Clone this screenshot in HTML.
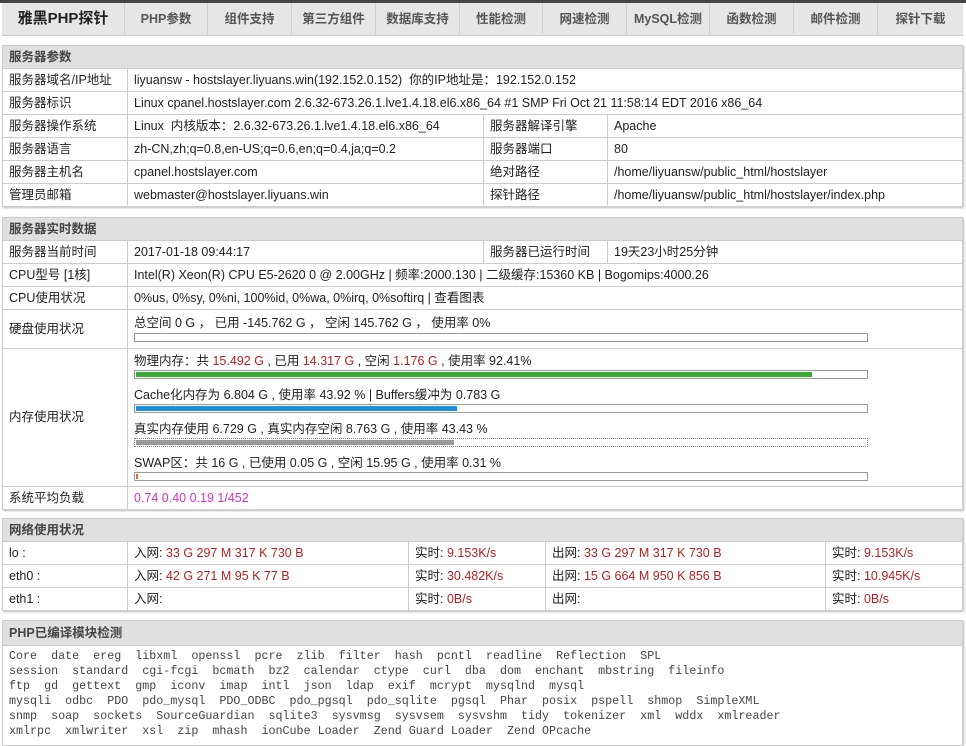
<!DOCTYPE html>
<html><head><meta charset="utf-8"><style>
*{margin:0;padding:0;box-sizing:border-box}
body{width:966px;height:741px;background:#fff;font-family:"Liberation Sans","Noto Sans CJK SC",sans-serif;font-size:12.5px;color:#222;position:relative;overflow:hidden}
#topline{position:absolute;left:0;top:0;width:966px;height:3px;background:#444}
#nav{position:absolute;left:2px;top:3px;width:961px;height:33px;background:#e6e6e6;border-bottom:1px solid #ccc;display:flex}
#nav div{height:33px;line-height:32px;text-align:center;font-weight:bold;color:#555;font-size:12.5px;border-right:1px solid #d0d0d0}
#nav div.first{font-size:15px;color:#222}
table{position:absolute;left:2px;width:961px;border-collapse:collapse;table-layout:fixed;box-shadow:1px 1px 2px #bbb}
td{border:1px solid #ccc;height:23px;line-height:21px;padding:0 6px;white-space:nowrap;overflow:hidden;vertical-align:middle}
th{background:#e0e0e0;border:1px solid #ccc;height:23px;line-height:21px;text-align:left;padding:0 6px;font-weight:bold;color:#444;font-size:12.5px}
.r{color:#b22222}.m{color:#cc33cc}
.bar{width:734px;height:9px;border:1px solid #999;position:relative}
.bar i{position:absolute;left:1px;top:1px;height:5px;display:block}
.t{height:18px;line-height:18px;margin-top:2px}
.blk{height:32px}
pre{font-family:"Liberation Mono",monospace;font-size:11.7px;line-height:15px;color:#444;padding:3px 6px}
</style></head><body>
<div id="topline"></div>
<div id="nav">
<div class="first" style="width:123px">雅黑PHP探针</div><div style="width:83px">PHP参数</div><div style="width:84px">组件支持</div><div style="width:84px">第三方组件</div><div style="width:84px">数据库支持</div><div style="width:83px">性能检测</div><div style="width:84px">网速检测</div><div style="width:83px">MySQL检测</div><div style="width:84px">函数检测</div><div style="width:84px">邮件检测</div><div style="width:85px;border-right:0">探针下载</div>
</div>

<table style="top:45px"><colgroup><col style="width:125px"><col style="width:356px"><col style="width:124px"><col></colgroup>
<tr><th colspan="4">服务器参数</th></tr>
<tr><td>服务器域名/IP地址</td><td colspan="3">liyuansw - hostslayer.liyuans.win(192.152.0.152)&nbsp; 你的IP地址是：192.152.0.152</td></tr>
<tr><td>服务器标识</td><td colspan="3">Linux cpanel.hostslayer.com 2.6.32-673.26.1.lve1.4.18.el6.x86_64 #1 SMP Fri Oct 21 11:58:14 EDT 2016 x86_64</td></tr>
<tr><td>服务器操作系统</td><td>Linux &nbsp;内核版本：2.6.32-673.26.1.lve1.4.18.el6.x86_64</td><td>服务器解译引擎</td><td>Apache</td></tr>
<tr><td>服务器语言</td><td>zh-CN,zh;q=0.8,en-US;q=0.6,en;q=0.4,ja;q=0.2</td><td>服务器端口</td><td>80</td></tr>
<tr><td>服务器主机名</td><td>cpanel.hostslayer.com</td><td>绝对路径</td><td>/home/liyuansw/public_html/hostslayer</td></tr>
<tr><td>管理员邮箱</td><td>webmaster@hostslayer.liyuans.win</td><td>探针路径</td><td>/home/liyuansw/public_html/hostslayer/index.php</td></tr>
</table>

<table style="top:217px"><colgroup><col style="width:125px"><col style="width:356px"><col style="width:124px"><col></colgroup>
<tr><th colspan="4">服务器实时数据</th></tr>
<tr><td>服务器当前时间</td><td>2017-01-18 09:44:17</td><td>服务器已运行时间</td><td>19天23小时25分钟</td></tr>
<tr><td>CPU型号 [1核]</td><td colspan="3">Intel(R) Xeon(R) CPU E5-2620 0 @ 2.00GHz | 频率:2000.130 | 二级缓存:15360 KB | Bogomips:4000.26</td></tr>
<tr><td>CPU使用状况</td><td colspan="3">0%us, 0%sy, 0%ni, 100%id, 0%wa, 0%irq, 0%softirq | 查看图表</td></tr>
<tr><td style="height:39px">硬盘使用状况</td><td colspan="3" style="height:39px;vertical-align:top;padding-top:2px"><div class="t">总空间 0 G ， 已用 -145.762 G ， 空闲 145.762 G ， 使用率 0%</div><div class="bar" style="margin-top:1px"></div></td></tr>
<tr><td style="height:136px">内存使用状况</td><td colspan="3" style="height:136px;vertical-align:top;padding-top:1px">
<div class="blk"><div class="t">物理内存：共 <span class="r">15.492 G</span> , 已用 <span class="r">14.317 G</span> , 空闲 <span class="r">1.176 G</span> , 使用率 92.41%</div><div class="bar"><i style="width:676px;background:#3aaa35"></i></div></div>
<div class="blk"><div class="t">Cache化内存为 6.804 G , 使用率 43.92 % | Buffers缓冲为 0.783 G</div><div class="bar"><i style="width:321px;background:#1e90e0"></i></div></div>
<div class="blk"><div class="t">真实内存使用 6.729 G , 真实内存空闲 8.763 G , 使用率 43.43 %</div><div class="bar" style="border:1px dotted #888"><i style="width:318px;background:#999"></i></div></div>
<div class="blk"><div class="t">SWAP区：共 16 G , 已使用 0.05 G , 空闲 15.95 G , 使用率 0.31 %</div><div class="bar"><i style="width:2px;background:#e07030"></i></div></div>
</td></tr>
<tr><td>系统平均负载</td><td colspan="3" class="m">0.74 0.40 0.19 1/452</td></tr>
</table>

<table style="top:518px"><colgroup><col style="width:125px"><col style="width:281px"><col style="width:137px"><col style="width:280px"><col></colgroup>
<tr><th colspan="5">网络使用状况</th></tr>
<tr><td>lo :</td><td>入网: <span class="r">33 G 297 M 317 K 730 B</span></td><td>实时: <span class="r">9.153K/s</span></td><td>出网: <span class="r">33 G 297 M 317 K 730 B</span></td><td>实时: <span class="r">9.153K/s</span></td></tr>
<tr><td>eth0 :</td><td>入网: <span class="r">42 G 271 M 95 K 77 B</span></td><td>实时: <span class="r">30.482K/s</span></td><td>出网: <span class="r">15 G 664 M 950 K 856 B</span></td><td>实时: <span class="r">10.945K/s</span></td></tr>
<tr><td>eth1 :</td><td>入网:</td><td>实时: <span class="r">0B/s</span></td><td>出网:</td><td>实时: <span class="r">0B/s</span></td></tr>
</table>

<table style="top:620px"><tr><th style="height:25px">PHP已编译模块检测</th></tr>
<tr><td style="padding:0;height:100px;vertical-align:top;line-height:15px"><pre>Core  date  ereg  libxml  openssl  pcre  zlib  filter  hash  pcntl  readline  Reflection  SPL
session  standard  cgi-fcgi  bcmath  bz2  calendar  ctype  curl  dba  dom  enchant  mbstring  fileinfo
ftp  gd  gettext  gmp  iconv  imap  intl  json  ldap  exif  mcrypt  mysqlnd  mysql
mysqli  odbc  PDO  pdo_mysql  PDO_ODBC  pdo_pgsql  pdo_sqlite  pgsql  Phar  posix  pspell  shmop  SimpleXML
snmp  soap  sockets  SourceGuardian  sqlite3  sysvmsg  sysvsem  sysvshm  tidy  tokenizer  xml  wddx  xmlreader
xmlrpc  xmlwriter  xsl  zip  mhash  ionCube Loader  Zend Guard Loader  Zend OPcache</pre></td></tr>
</table>
</body></html>
